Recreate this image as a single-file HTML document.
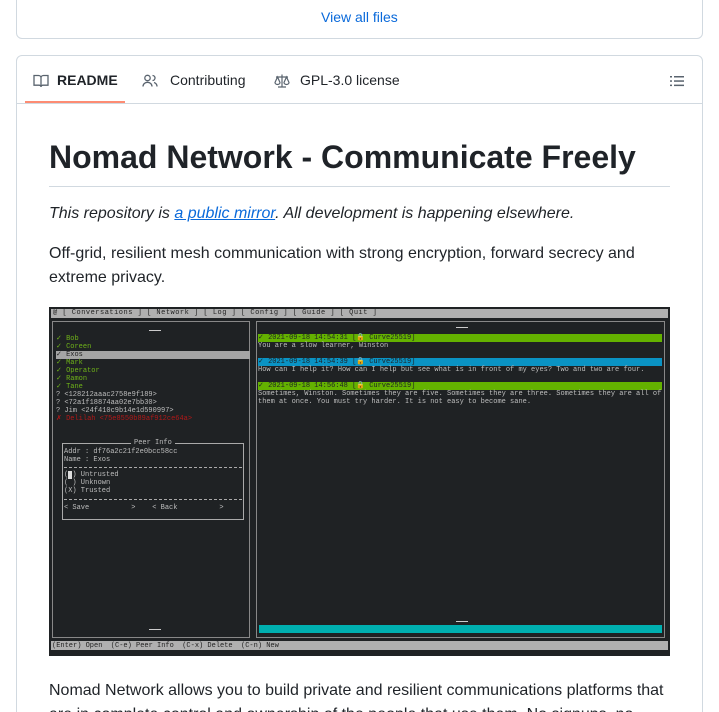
<!DOCTYPE html>
<html style="height:712px;overflow:hidden"><head><meta charset="utf-8"><style>
*{box-sizing:border-box;margin:0;padding:0}
body{width:719px;height:712px;overflow:hidden;background:#fff;font-family:"Liberation Sans",sans-serif;color:#1f2328;position:relative}
.card{position:absolute;border:1px solid #d1d9e0;border-radius:6px;background:#fff}
.a{position:absolute}
.t{position:absolute;font-family:"Liberation Mono",monospace;font-size:7px;line-height:8px;white-space:pre;color:#bdbdbd}
.g{color:#6fb319}
</style></head><body>
<div class="card" style="left:16px;top:-10px;width:687px;height:49px"></div>
<div class="a" style="left:321px;top:9px;font-size:14px;color:#0969da">View all files</div>

<div class="card" style="left:16px;top:55px;width:687px;height:690px"></div>
<div class="a" style="left:17px;top:103px;width:685px;height:1px;background:#d1d9e0"></div>
<div class="a" style="left:25px;top:101px;width:100px;height:2px;background:#fd8c73"></div>
<svg class="a" style="left:33px;top:73px" width="16" height="16" viewBox="0 0 16 16" fill="none" stroke="#59636e" stroke-width="1.3"><path d="M1 2.5h4.5c1.3 0 2.5 1 2.5 2.3V14c0-1-1-1.8-2-1.8H1z M15 2.5h-4.5C9.2 2.5 8 3.5 8 4.8V14c0-1 1-1.8 2-1.8h5z"/></svg>
<div class="a" style="left:57px;top:72px;font-size:14px;font-weight:bold">README</div>
<svg class="a" style="left:142px;top:73px" width="16" height="16" viewBox="0 0 16 16" fill="none" stroke="#59636e" stroke-width="1.3"><circle cx="5.5" cy="5" r="2.7"/><path d="M1 13.5c0-2.5 2-4.2 4.5-4.2S10 11 10 13.5M10.5 2.5a2.5 2.5 0 010 5M12 9.5c1.8.6 3 2 3 4"/></svg>
<div class="a" style="left:170px;top:72px;font-size:14px">Contributing</div>
<svg class="a" style="left:274px;top:73px" width="16" height="16" viewBox="0 0 16 16" fill="none" stroke="#59636e" stroke-width="1.2"><path d="M8 1.5v12M4 14h8M2 4h12M3.5 4L1 9.5c0 1.2 1.2 2 2.5 2s2.5-.8 2.5-2zM12.5 4L10 9.5c0 1.2 1.2 2 2.5 2s2.5-.8 2.5-2z"/></svg>
<div class="a" style="left:300px;top:72px;font-size:14px">GPL-3.0 license</div>
<svg class="a" style="left:669px;top:73px" width="16" height="16" viewBox="0 0 16 16" fill="#59636e"><rect x="1" y="3" width="2" height="1.5"/><rect x="5" y="3" width="10" height="1.5"/><rect x="1" y="7.3" width="2" height="1.5"/><rect x="5" y="7.3" width="10" height="1.5"/><rect x="1" y="11.6" width="2" height="1.5"/><rect x="5" y="11.6" width="10" height="1.5"/></svg>

<div class="a" style="left:49px;top:137px;font-size:32px;font-weight:bold;line-height:40px">Nomad Network - Communicate Freely</div>
<div class="a" style="left:49px;top:186px;width:621px;height:1px;background:#d1d9e0"></div>
<div class="a" style="left:49px;top:202px;font-size:16px;line-height:24px;font-style:italic">This repository is <span style="color:#0969da;text-decoration:underline">a public mirror</span>. All development is happening elsewhere.</div>
<div class="a" style="left:49px;top:242px;width:621px;font-size:16px;line-height:24px">Off-grid, resilient mesh communication with strong encryption, forward secrecy and extreme privacy.</div>

<div class="a" style="left:49px;top:307px;width:621px;height:349px;background:#1f2224;overflow:hidden">
 <div class="a" style="left:2px;top:2px;width:617px;height:9px;background:#b0b0b0"></div>
 <div class="t" style="left:4px;top:2px;color:#222;letter-spacing:0.5px">@ [ Conversations ] [ Network ] [ Log ] [ Config ] [ Guide ] [ Quit ]</div>
 <div class="a" style="left:3px;top:14px;width:198px;height:317px;border:1px solid #888"></div>
 <div class="a" style="left:207px;top:14px;width:409px;height:317px;border:1px solid #888"></div>
 <div class="a" style="left:100px;top:23px;width:12px;height:1px;background:#ccc"></div>
 <div class="a" style="left:100px;top:322px;width:12px;height:1px;background:#ccc"></div>
 <div class="a" style="left:407px;top:20px;width:12px;height:1px;background:#ccc"></div>
 <div class="a" style="left:407px;top:314px;width:12px;height:1px;background:#ccc"></div>
 <div class="a" style="left:7px;top:44px;width:194px;height:8px;background:#a5a5a5"></div>
 <div class="t g" style="left:7px;top:28px">✓ Bob
✓ Coreen</div>
 <div class="t" style="left:7px;top:44px;color:#222">✓ Exos</div>
 <div class="t g" style="left:7px;top:52px">✓ Mark
✓ Operator
✓ Ramon
✓ Tane</div>
 <div class="t" style="left:7px;top:84px">? &lt;128212aaac2758e9f189&gt;
? &lt;72a1f18874aa02e7bb30&gt;
? Jim &lt;24f410c9b14e1d590997&gt;</div>
 <div class="t" style="left:7px;top:108px;color:#b01818">✗ Delilah &lt;75e8550b89af912ce64a&gt;</div>
 <div class="a" style="left:13px;top:136px;width:182px;height:77px;border:1px solid #aaa"></div>
 <div class="t" style="left:82px;top:132px;background:#1f2224;padding:0 3px">Peer Info</div>
 <div class="t" style="left:15px;top:141px">Addr : df76a2c21f2e0bcc58cc
Name : Exos</div>
 <div class="a" style="left:15px;top:160px;width:178px;border-top:1px dashed #aaa"></div>
 <div class="t" style="left:15px;top:164px">( ) Untrusted
( ) Unknown
(X) Trusted</div>
 <div class="a" style="left:19px;top:164px;width:4px;height:8px;background:#ddd"></div>
 <div class="a" style="left:15px;top:192px;width:178px;border-top:1px dashed #aaa"></div>
 <div class="t" style="left:15px;top:197px">&lt; Save          &gt;    &lt; Back          &gt;</div>
 <div class="a" style="left:209px;top:27px;width:404px;height:8px;background:#64b200"></div>
 <div class="t" style="left:209px;top:27px;color:#1f2224">✓ 2021-09-18 14:54:31 [🔒 Curve25519]</div>
 <div class="t" style="left:209px;top:35px">You are a slow learner, Winston</div>
 <div class="a" style="left:209px;top:51px;width:404px;height:8px;background:#0a93c4"></div>
 <div class="t" style="left:209px;top:51px;color:#1f2224">✓ 2021-09-18 14:54:39 [🔒 Curve25519]</div>
 <div class="t" style="left:209px;top:59px">How can I help it? How can I help but see what is in front of my eyes? Two and two are four.</div>
 <div class="a" style="left:209px;top:75px;width:404px;height:8px;background:#64b200"></div>
 <div class="t" style="left:209px;top:75px;color:#1f2224">✓ 2021-09-18 14:56:48 [🔒 Curve25519]</div>
 <div class="t" style="left:209px;top:83px">Sometimes, Winston. Sometimes they are five. Sometimes they are three. Sometimes they are all of
them at once. You must try harder. It is not easy to become sane.</div>
 <div class="a" style="left:210px;top:318px;width:403px;height:8px;background:#00b0b0"></div>
 <div class="a" style="left:2px;top:334px;width:617px;height:9px;background:#b0b0b0"></div>
 <div class="t" style="left:3px;top:335px;color:#222">(Enter) Open  (C-e) Peer Info  (C-x) Delete  (C-n) New</div>
</div>

<div class="a" style="left:49px;top:679px;width:630px;font-size:16px;line-height:24px">Nomad Network allows you to build private and resilient communications platforms that are in complete control and ownership of the people that use them. No signups, no</div>
</body></html>
